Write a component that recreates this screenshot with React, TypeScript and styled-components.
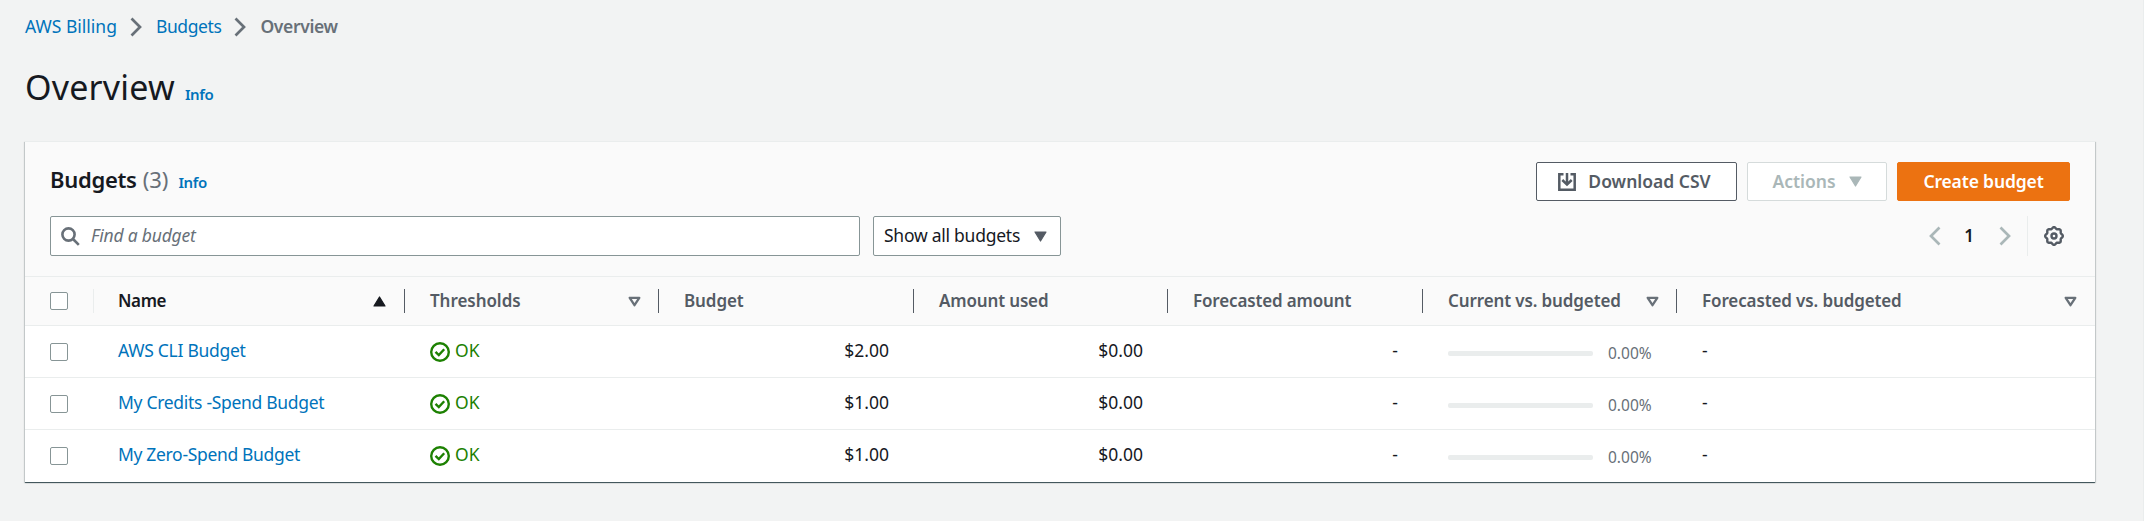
import React from 'react';
import styled, { createGlobalStyle, css } from 'styled-components';

const Global = createGlobalStyle`
  *{box-sizing:border-box}
  body{margin:0;background:#f2f3f3;font-family:"Noto Sans","Open Sans",sans-serif;font-size:17.5px;color:#16191f;}
`;

const Page = styled.main`
  height: 521px;
  padding: 13px 48px 0 25px;
  border-right: 1px solid #eaeded;
  overflow: hidden;
`;
const Label = styled.span<{ $ls?: number; $lift?: number; $grow?: boolean }>`
  letter-spacing: ${(p) => p.$ls ?? 0}px;
  white-space: nowrap;
  padding-bottom: ${(p) => p.$lift ?? 0}px;
  ${(p) => p.$grow && css`flex: 1;`}
`;
const Crumbs = styled.nav`
  display: flex;
  align-items: center;
  height: 26px;
  line-height: 24px;
`;
const CrumbLink = styled.a`
  padding-bottom: 1px;
  color: #0073bb;
  white-space: nowrap;
`;
const CrumbCurrent = styled.span`
  padding-bottom: 1px;
  color: #687078;
  font-weight: 600;
`;
const CrumbArrow = styled.span`
  display: flex;
  margin: 2px 14px 0 13px;
  flex: none;
`;
const TitleRow = styled.header`
  display: flex;
  align-items: baseline;
  height: 50px;
  margin-top: 24px;
  line-height: 49px;
`;
const Title = styled.h1`
  margin: 0;
  font-size: 34px;
  font-weight: 400;
`;
const Info = styled.a`
  margin-left: 10px;
  color: #0073bb;
  font-size: 15px;
  font-weight: 600;
`;
const Card = styled.section`
  margin-top: 28px;
  height: 341px;
  background: #fff;
  border-top: 1px solid #eaeded;
  box-shadow: 0 1px 1px 0 rgba(0,28,36,.3), 1px 1px 1px 0 rgba(0,28,36,.15), -1px 1px 1px 0 rgba(0,28,36,.15), 0 1px 0 #879596;
`;
const CardHeader = styled.div`
  height: 134px;
  padding: 20px 25px 0;
  background: #fafafa;
`;
const Bar = styled.div`
  display: flex;
  align-items: center;
  & + & { margin-top: 15px; }
`;
const HeadingGroup = styled.div`
  display: flex;
  align-items: baseline;
  flex: 1;
  height: 39px;
  line-height: 34px;
`;
const Heading = styled.h2`
  margin: 0;
  font-size: 22px;
  font-weight: 600;
`;
const Count = styled.span`
  font-size: 22px;
  color: #687078;
  margin-left: 6px;
`;
const Button = styled.button<{ $kind?: 'primary' | 'disabled'; $w: number }>`
  display: flex;
  align-items: center;
  justify-content: center;
  gap: ${(p) => (p.$kind === 'disabled' ? 13 : 12)}px;
  width: ${(p) => p.$w}px;
  height: 39px;
  margin-left: 10px;
  padding: 0 ${(p) => (p.$kind ? 0 : 4)}px 0 0;
  font: 600 17.5px/37px "Noto Sans", sans-serif;
  color: #545b64;
  background: #fff;
  border: 1px solid #545b64;
  border-radius: 2px;
  ${(p) => p.$kind === 'disabled' && css`color: #aab7b8; border-color: #d5dbdb;`}
  ${(p) => p.$kind === 'primary' && css`color: #fff; background: #ec7211; border-color: #ec7211;`}
`;
const Field = styled.div<{ $w: number; $right?: number }>`
  display: flex;
  align-items: center;
  width: ${(p) => p.$w}px;
  height: 40px;
  margin-right: 13px;
  padding: 0 ${(p) => p.$right ?? 10}px 0 10px;
  background: #fff;
  border: 1px solid #879596;
  border-radius: 2px;
`;
const Placeholder = styled.em`
  display: flex;
  margin-left: 11px;
  color: #687078;
`;
const Pager = styled.div`
  display: flex;
  align-items: center;
  height: 40px;
  margin-left: auto;
`;
const PageNo = styled.b`
  width: 58px;
  padding: 0 2px 2px 0;
  text-align: center;
  font-weight: 600;
  font-size: 17px;
`;
const Prefs = styled.div`
  display: flex;
  align-items: center;
  height: 40px;
  margin-left: 16px;
  padding: 0 6px 0 16px;
  border-left: 1px solid #eaeded;
`;
const cols = '69px 311px 254px 255px 254px 255px 254px 1fr';
const HeadRow = styled.div`
  display: grid;
  grid-template-columns: ${cols};
  align-items: center;
  height: 50px;
  background: #fafafa;
  border-top: 1px solid #eaeded;
  border-bottom: 1px solid #eaeded;
`;
const HeadCell = styled.div<{ $active?: boolean; $last?: boolean }>`
  display: flex;
  align-items: center;
  justify-content: space-between;
  height: 24px;
  padding: 0 ${(p) => (p.$active ? 18 : 17)}px 0 ${(p) => (p.$active ? 24 : 25)}px;
  line-height: 22px;
  font-size: 17px;
  font-weight: 600;
  color: ${(p) => (p.$active ? '#16191f' : '#545b64')};
  border-right: 1px solid ${(p) => (p.$last ? 'transparent' : '#545b64')};
`;
const Row = styled.div`
  display: grid;
  grid-template-columns: ${cols};
  height: 52px;
  border-bottom: 1px solid #eaeded;
  &:last-child { border-bottom-color: transparent; }
`;
const Cell = styled.div<{ $right?: boolean; $first?: boolean }>`
  display: flex;
  align-items: center;
  justify-content: ${(p) => (p.$right ? 'flex-end' : 'flex-start')};
  padding: 0 25px 0 ${(p) => (p.$first ? 24 : 25)}px;
`;
const NameLink = styled.a`
  display: flex;
  color: #0073bb;
`;
const Status = styled.span`
  color: #1d8102;
  margin-left: 5px;
  padding-bottom: 3px;
`;
const Check = styled.span`
  display: block;
  width: 18px;
  height: 18px;
  margin-left: 25px;
  background: #fff;
  border: 1px solid #879596;
  border-radius: 2px;
`;
const CheckSlot = styled.div<{ $line?: boolean }>`
  display: flex;
  align-items: center;
  height: ${(p) => (p.$line ? '24px' : '100%')};
  padding-top: ${(p) => (p.$line ? 0 : 1)}px;
  border-right: 1px solid ${(p) => (p.$line ? '#eaeded' : 'transparent')};
`;
const Track = styled.span`
  width: 145px;
  height: 5px;
  margin-top: 4px;
  flex: none;
  background: #eaeded;
  border-radius: 2px;
`;
const Percent = styled.span`
  margin: 2px 0 0 15px;
  font-size: 15.5px;
  color: #687078;
`;

const Chevron = ({ left, color = '#687078' }: { left?: boolean; color?: string }) => (
  <svg width="12" height="20" viewBox="0 0 12 20" fill="none" stroke={color} strokeWidth="2.7">
    <path d={left ? 'M10.5 1.5 2 10l8.5 8.5' : 'M1.5 1.5 10 10l-8.5 8.5'} />
  </svg>
);
const Caret = ({ up, hollow, color = '#545b64' }: { up?: boolean; hollow?: boolean; color?: string }) => (
  <svg width="13" height="11" viewBox="0 0 13 11" fill={hollow ? 'none' : color} stroke={color} strokeWidth={hollow ? 2.3 : 1.2} strokeLinejoin="round">
    <path d={up ? 'M6.5 1 12 10H1Z' : hollow ? 'M1.7 1.8h9.6L6.5 9.2Z' : 'M1 1h11L6.5 10Z'} />
  </svg>
);
const SearchIcon = () => (
  <svg width="19" height="19" viewBox="0 0 19 19" fill="none" stroke="#687078" strokeWidth="2.6">
    <circle cx="7.5" cy="7.5" r="6.1" /><path d="m12 12 5.8 5.8" />
  </svg>
);
const DownloadIcon = () => (
  <svg width="18" height="18" viewBox="0 0 18 18" fill="none" stroke="#545b64" strokeWidth="2.5">
    <path d="M5.5 1.3H1.3v15.4h15.4V1.3h-4.2M9 0v11M4.3 7 9 11.6 13.7 7" />
  </svg>
);
const OkIcon = () => (
  <svg width="20" height="20" viewBox="0 0 20 20" fill="none" stroke="#1d8102" strokeWidth="2.4">
    <circle cx="10" cy="10" r="8.8" /><path d="m5.5 9.8 3.3 3.2 5.4-5.8" />
  </svg>
);
const gearOutline = Array.from({ length: 96 }, (_, i) => {
  const a = (i / 96) * Math.PI * 2;
  const r = 8.1 + 0.75 * Math.cos(8 * a);
  return `${(10 + r * Math.cos(a)).toFixed(2)},${(10 + r * Math.sin(a)).toFixed(2)}`;
}).join(' ');
const GearIcon = () => (
  <svg width="20" height="20" viewBox="0 0 20 20" fill="none" stroke="#545b64" strokeWidth="2.4">
    <polygon points={gearOutline} strokeLinejoin="round" />
    <circle cx="10" cy="10" r="2.5" />
  </svg>
);

const rows = [
  { name: 'AWS CLI Budget', budget: '$2.00', ls: -0.28 },
  { name: 'My Credits -Spend Budget', budget: '$1.00', ls: -0.3 },
  { name: 'My Zero-Spend Budget', budget: '$1.00', ls: -0.33 },
];

export default function App() {
  return (
    <>
      <Global />
      <Page>
        <Crumbs>
          <CrumbLink><Label>AWS Billing</Label></CrumbLink>
          <CrumbArrow><Chevron /></CrumbArrow>
          <CrumbLink><Label $ls={-0.4}>Budgets</Label></CrumbLink>
          <CrumbArrow><Chevron /></CrumbArrow>
          <CrumbCurrent><Label $ls={-0.35}>Overview</Label></CrumbCurrent>
        </Crumbs>
        <TitleRow>
          <Title><Label $ls={0.2}>Overview</Label></Title>
          <Info><Label $ls={-0.4}>Info</Label></Info>
        </TitleRow>
        <Card>
          <CardHeader>
            <Bar>
              <HeadingGroup>
                <Heading><Label $ls={-0.3}>Budgets</Label></Heading>
                <Count><Label>(3)</Label></Count>
                <Info><Label $ls={-0.4}>Info</Label></Info>
              </HeadingGroup>
              <Button $w={201}><DownloadIcon /><Label>Download CSV</Label></Button>
              <Button $w={140} $kind="disabled"><Label>Actions</Label><Caret color="#aab7b8" /></Button>
              <Button $w={173} $kind="primary"><Label $ls={-0.15}>Create budget</Label></Button>
            </Bar>
            <Bar>
              <Field $w={810}><SearchIcon /><Placeholder><Label $lift={2} $ls={-0.2}>Find a budget</Label></Placeholder></Field>
              <Field $w={188} $right={13}><Label $lift={2} $grow $ls={-0.25}>Show all budgets</Label><Caret /></Field>
              <Pager>
                <Chevron left color="#aab7b8" /><PageNo>1</PageNo><Chevron color="#aab7b8" />
                <Prefs><GearIcon /></Prefs>
              </Pager>
            </Bar>
          </CardHeader>
          <HeadRow>
            <CheckSlot $line><Check /></CheckSlot>
            <HeadCell $active><Label $lift={1} $ls={-0.4}>Name</Label><Caret up color="#16191f" /></HeadCell>
            <HeadCell><Label $lift={1} $ls={-0.05}>Thresholds</Label><Caret hollow color="#687078" /></HeadCell>
            <HeadCell><Label $lift={1} $ls={-0.1}>Budget</Label></HeadCell>
            <HeadCell><Label $lift={1} $ls={-0.15}>Amount used</Label></HeadCell>
            <HeadCell><Label $lift={1} $ls={-0.15}>Forecasted amount</Label></HeadCell>
            <HeadCell><Label $lift={1} $ls={-0.12}>Current vs. budgeted</Label><Caret hollow color="#687078" /></HeadCell>
            <HeadCell $last><Label $lift={1} $ls={-0.12}>Forecasted vs. budgeted</Label><Caret hollow color="#687078" /></HeadCell>
          </HeadRow>
          {rows.map((r) => (
            <Row key={r.name}>
              <CheckSlot><Check /></CheckSlot>
              <Cell $first><NameLink><Label $lift={3} $ls={r.ls}>{r.name}</Label></NameLink></Cell>
              <Cell><OkIcon /><Status>OK</Status></Cell>
              <Cell $right><Label $lift={3}>{r.budget}</Label></Cell>
              <Cell $right><Label $lift={3}>$0.00</Label></Cell>
              <Cell $right><Label $lift={3}>-</Label></Cell>
              <Cell><Track /><Percent>0.00%</Percent></Cell>
              <Cell><Label $lift={3}>-</Label></Cell>
            </Row>
          ))}
        </Card>
      </Page>
    </>
  );
}
